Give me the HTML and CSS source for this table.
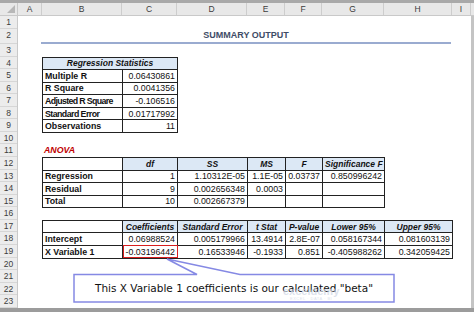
FILE: index.html
```html
<!DOCTYPE html>
<html>
<head>
<meta charset="utf-8">
<link rel="stylesheet" href="styles.css">
</head>
<body>
<div class="app">
  <div class="topstrip"></div>
  <div class="colheads">
    <div class="corner"><svg width="8" height="8" viewBox="0 0 8 8"><polygon points="8,0 8,8 0,8" fill="#b7b7b7"/></svg></div>
    <div class="ch ca">A</div>
    <div class="ch cb">B</div>
    <div class="ch cc">C</div>
    <div class="ch cd">D</div>
    <div class="ch ce">E</div>
    <div class="ch cf">F</div>
    <div class="ch cg">G</div>
    <div class="ch chh">H</div>
    <div class="ch ci">I</div>
  </div>
  <div class="main">
    <div class="rowheads">
      <div class="rh r1">1</div><div class="rh r2">2</div><div class="rh r3">3</div>
      <div class="rh">4</div><div class="rh">5</div><div class="rh">6</div><div class="rh">7</div>
      <div class="rh">8</div><div class="rh">9</div><div class="rh">10</div><div class="rh">11</div>
      <div class="rh">12</div><div class="rh">13</div><div class="rh">14</div><div class="rh">15</div>
      <div class="rh">16</div><div class="rh">17</div><div class="rh">18</div><div class="rh">19</div>
      <div class="rh">20</div><div class="rh">21</div><div class="rh">22</div><div class="rh">23</div>
    </div>
    <div class="sheet">
      <div class="title"><span>SUMMARY OUTPUT</span></div>

      <table class="tbl t1">
        <colgroup><col class="wb"><col class="wc"></colgroup>
        <tr><th colspan="2">Regression Statistics</th></tr>
        <tr><td class="lbl">Multiple R</td><td>0.06430861</td></tr>
        <tr><td class="lbl">R Square</td><td>0.0041356</td></tr>
        <tr><td class="lbl nar1">Adjusted R Square</td><td>-0.106516</td></tr>
        <tr><td class="lbl nar2">Standard Error</td><td>0.01717992</td></tr>
        <tr><td class="lbl">Observations</td><td>11</td></tr>
      </table>

      <div class="anova">ANOVA</div>

      <table class="tbl t2">
        <colgroup><col class="wb"><col class="wc"><col class="wd"><col class="we"><col class="wf"><col class="wg"></colgroup>
        <tr><td class="blank"></td><th>df</th><th>SS</th><th>MS</th><th>F</th><th>Significance F</th></tr>
        <tr><td class="lbl">Regression</td><td>1</td><td>1.10312E-05</td><td>1.1E-05</td><td>0.03737</td><td>0.850996242</td></tr>
        <tr><td class="lbl">Residual</td><td>9</td><td>0.002656348</td><td>0.0003</td><td></td><td></td></tr>
        <tr><td class="lbl">Total</td><td>10</td><td>0.002667379</td><td></td><td></td><td></td></tr>
      </table>

      <table class="tbl t3">
        <colgroup><col class="wb"><col class="wc"><col class="wd"><col class="we"><col class="wf"><col class="wg"><col class="wh"></colgroup>
        <tr><td class="blank"></td><th>Coefficients</th><th>Standard Error</th><th>t Stat</th><th>P-value</th><th>Lower 95%</th><th>Upper 95%</th></tr>
        <tr><td class="lbl">Intercept</td><td>0.06988524</td><td>0.005179966</td><td>13.4914</td><td>2.8E-07</td><td>0.058167344</td><td>0.081603139</td></tr>
        <tr><td class="lbl">X Variable 1</td><td class="hl">-0.03196442</td><td>0.16533946</td><td>-0.1933</td><td>0.851</td><td>-0.405988262</td><td>0.342059425</td></tr>
      </table>

      <div class="callout">
        <svg class="callout-shape" width="330" height="52" viewBox="0 0 330 52">
          <path d="M1 19.5 H124 L94 4 L167 19.5 H321 V47 H1 Z" fill="#fff" stroke="#8589e4" stroke-width="1.5" stroke-linejoin="miter"/>
        </svg>
        <div class="callout-text">This X Variable 1 coefficients is our calculated "beta"</div>
        <div class="mark"><span class="mark-name">exceldemy</span><span class="mark-sub">EXCEL · DATA · BI</span></div>
      </div>
    </div>
    <div class="scroll"></div>
  </div>
  <div class="bottombar"></div>
</div>
</body>
</html>
```
FILE: styles.css
```css
html, body {
  margin: 0;
  padding: 0;
  background: #fff;
}
.app {
  width: 474px;
  height: 312px;
  overflow: hidden;
  display: flex;
  flex-direction: column;
  font-family: "Liberation Sans", Arial, sans-serif;
  color: #000;
}
.topstrip {
  height: 3px;
  background: #a9a9a9;
  flex: none;
}
.colheads {
  display: flex;
  height: 13px;
  flex: none;
  background: #e8e8e8;
  border-bottom: 1px solid #c9c9c9;
  box-sizing: border-box;
}
.corner {
  width: 18px;
  flex: none;
  border-right: 1px solid #c9c9c9;
  box-sizing: border-box;
  display: flex;
  align-items: flex-end;
  justify-content: flex-end;
  padding: 0 2px 2px 0;
}
.corner svg { display: block; }
.ch {
  flex: none;
  box-sizing: border-box;
  border-right: 1px solid #cdcdcd;
  font-size: 8.5px;
  line-height: 12px;
  text-align: center;
  color: #3c3c3c;
}
.ca { width: 24px; }
.cb { width: 80px; }
.cc { width: 55px; }
.cd { width: 70px; }
.ce { width: 38px; }
.cf { width: 37px; }
.cg { width: 62px; }
.chh { width: 68px; }
.ci { width: 19px; }

.main {
  display: flex;
  flex: 1;
  min-height: 0;
}
.rowheads {
  width: 18px;
  flex: none;
  background: #ececec;
  border-right: 1px solid #c9c9c9;
  box-sizing: border-box;
  display: flex;
  flex-direction: column;
}
.rh {
  height: 12.575px;
  flex: none;
  box-sizing: border-box;
  border-bottom: 1px solid #d6d6d6;
  font-size: 8.5px;
  line-height: 12px;
  text-align: center;
  color: #3c3c3c;
}
.rh.r1 { height: 12.5px; }
.rh.r2 { height: 15.5px; }
.rh.r3 { height: 12.5px; }

.sheet {
  position: relative;
  flex: none;
  width: 453px;
  display: grid;
  grid-template-columns: 24px 80px 55px 70px 38px 37px 62px 68px 19px;
  grid-template-rows: 12.5px 15.5px 12.5px repeat(20, 12.575px);
  align-content: start;
}
.scroll {
  flex: none;
  width: 3px;
  background: #c4c4c4;
}
.bottombar {
  height: 4px;
  flex: none;
  background: #9c9c9c;
}

.title {
  grid-column: 2 / 9;
  grid-row: 2;
  border-bottom: 2px solid #9aabd0;
  text-align: center;
  font-weight: 700;
  font-size: 9px;
  line-height: 13px;
  color: #3e4c66;
  margin-left: -1px;
  margin-right: 1px;
}

.tbl {
  border-collapse: collapse;
  table-layout: fixed;
  width: 100%;
  align-self: start;
  font-size: 8.8px;
}
.wb { width: 80px; }
.wc { width: 55px; }
.wd { width: 70px; }
.we { width: 38px; }
.wf { width: 37px; }
.wg { width: 62px; }
.wh { width: 68px; }
.tbl td, .tbl th {
  border: 1px solid #222;
  height: 12.575px;
  padding: 0 2px;
  line-height: 10px;
  white-space: nowrap;
  overflow: hidden;
  box-sizing: border-box;
  text-align: right;
  font-weight: 400;
  color: #111;
}
.tbl th {
  background: #dce8f5;
  font-weight: 700;
  font-style: italic;
  text-align: center;
  font-size: 8.5px;
}
.tbl td.lbl {
  text-align: left;
  font-weight: 700;
}
.tbl td.nar1 { letter-spacing: -0.65px; }
.tbl td.nar2 { letter-spacing: -0.55px; }
.tbl td.hl {
  outline: 1.5px solid #d81e1e;
  outline-offset: -1px;
  position: relative;
}
.t1 { grid-column: 2 / 4; grid-row: 4 / 10; }
.t2 { grid-column: 2 / 8; grid-row: 12 / 16; }
.t3 { grid-column: 2 / 9; grid-row: 17 / 20; }

.anova {
  grid-column: 2;
  grid-row: 11;
  color: #c00000;
  font-weight: 700;
  font-style: italic;
  font-size: 8.8px;
  line-height: 12.5px;
  padding-left: 2px;
}

.callout {
  position: absolute;
  left: 55px;
  top: 239px;
  width: 330px;
  height: 52px;
}
.callout-shape {
  position: absolute;
  left: 0;
  top: 0;
  display: block;
}
.callout-text {
  position: absolute;
  left: 1px;
  top: 19.5px;
  width: 320px;
  height: 27.5px;
  line-height: 27px;
  text-align: center;
  font-family: "DejaVu Sans", sans-serif;
  font-size: 10.5px;
  color: #111;
}
.mark {
  position: absolute;
  left: 210px;
  top: 31px;
  display: flex;
  flex-direction: column;
  align-items: center;
  color: #cfd7e6;
  opacity: 0.7;
}
.mark-name {
  font-size: 11px;
  line-height: 10px;
  font-weight: 700;
}
.mark-sub {
  font-size: 4px;
  line-height: 5px;
  letter-spacing: 0.5px;
}
```
